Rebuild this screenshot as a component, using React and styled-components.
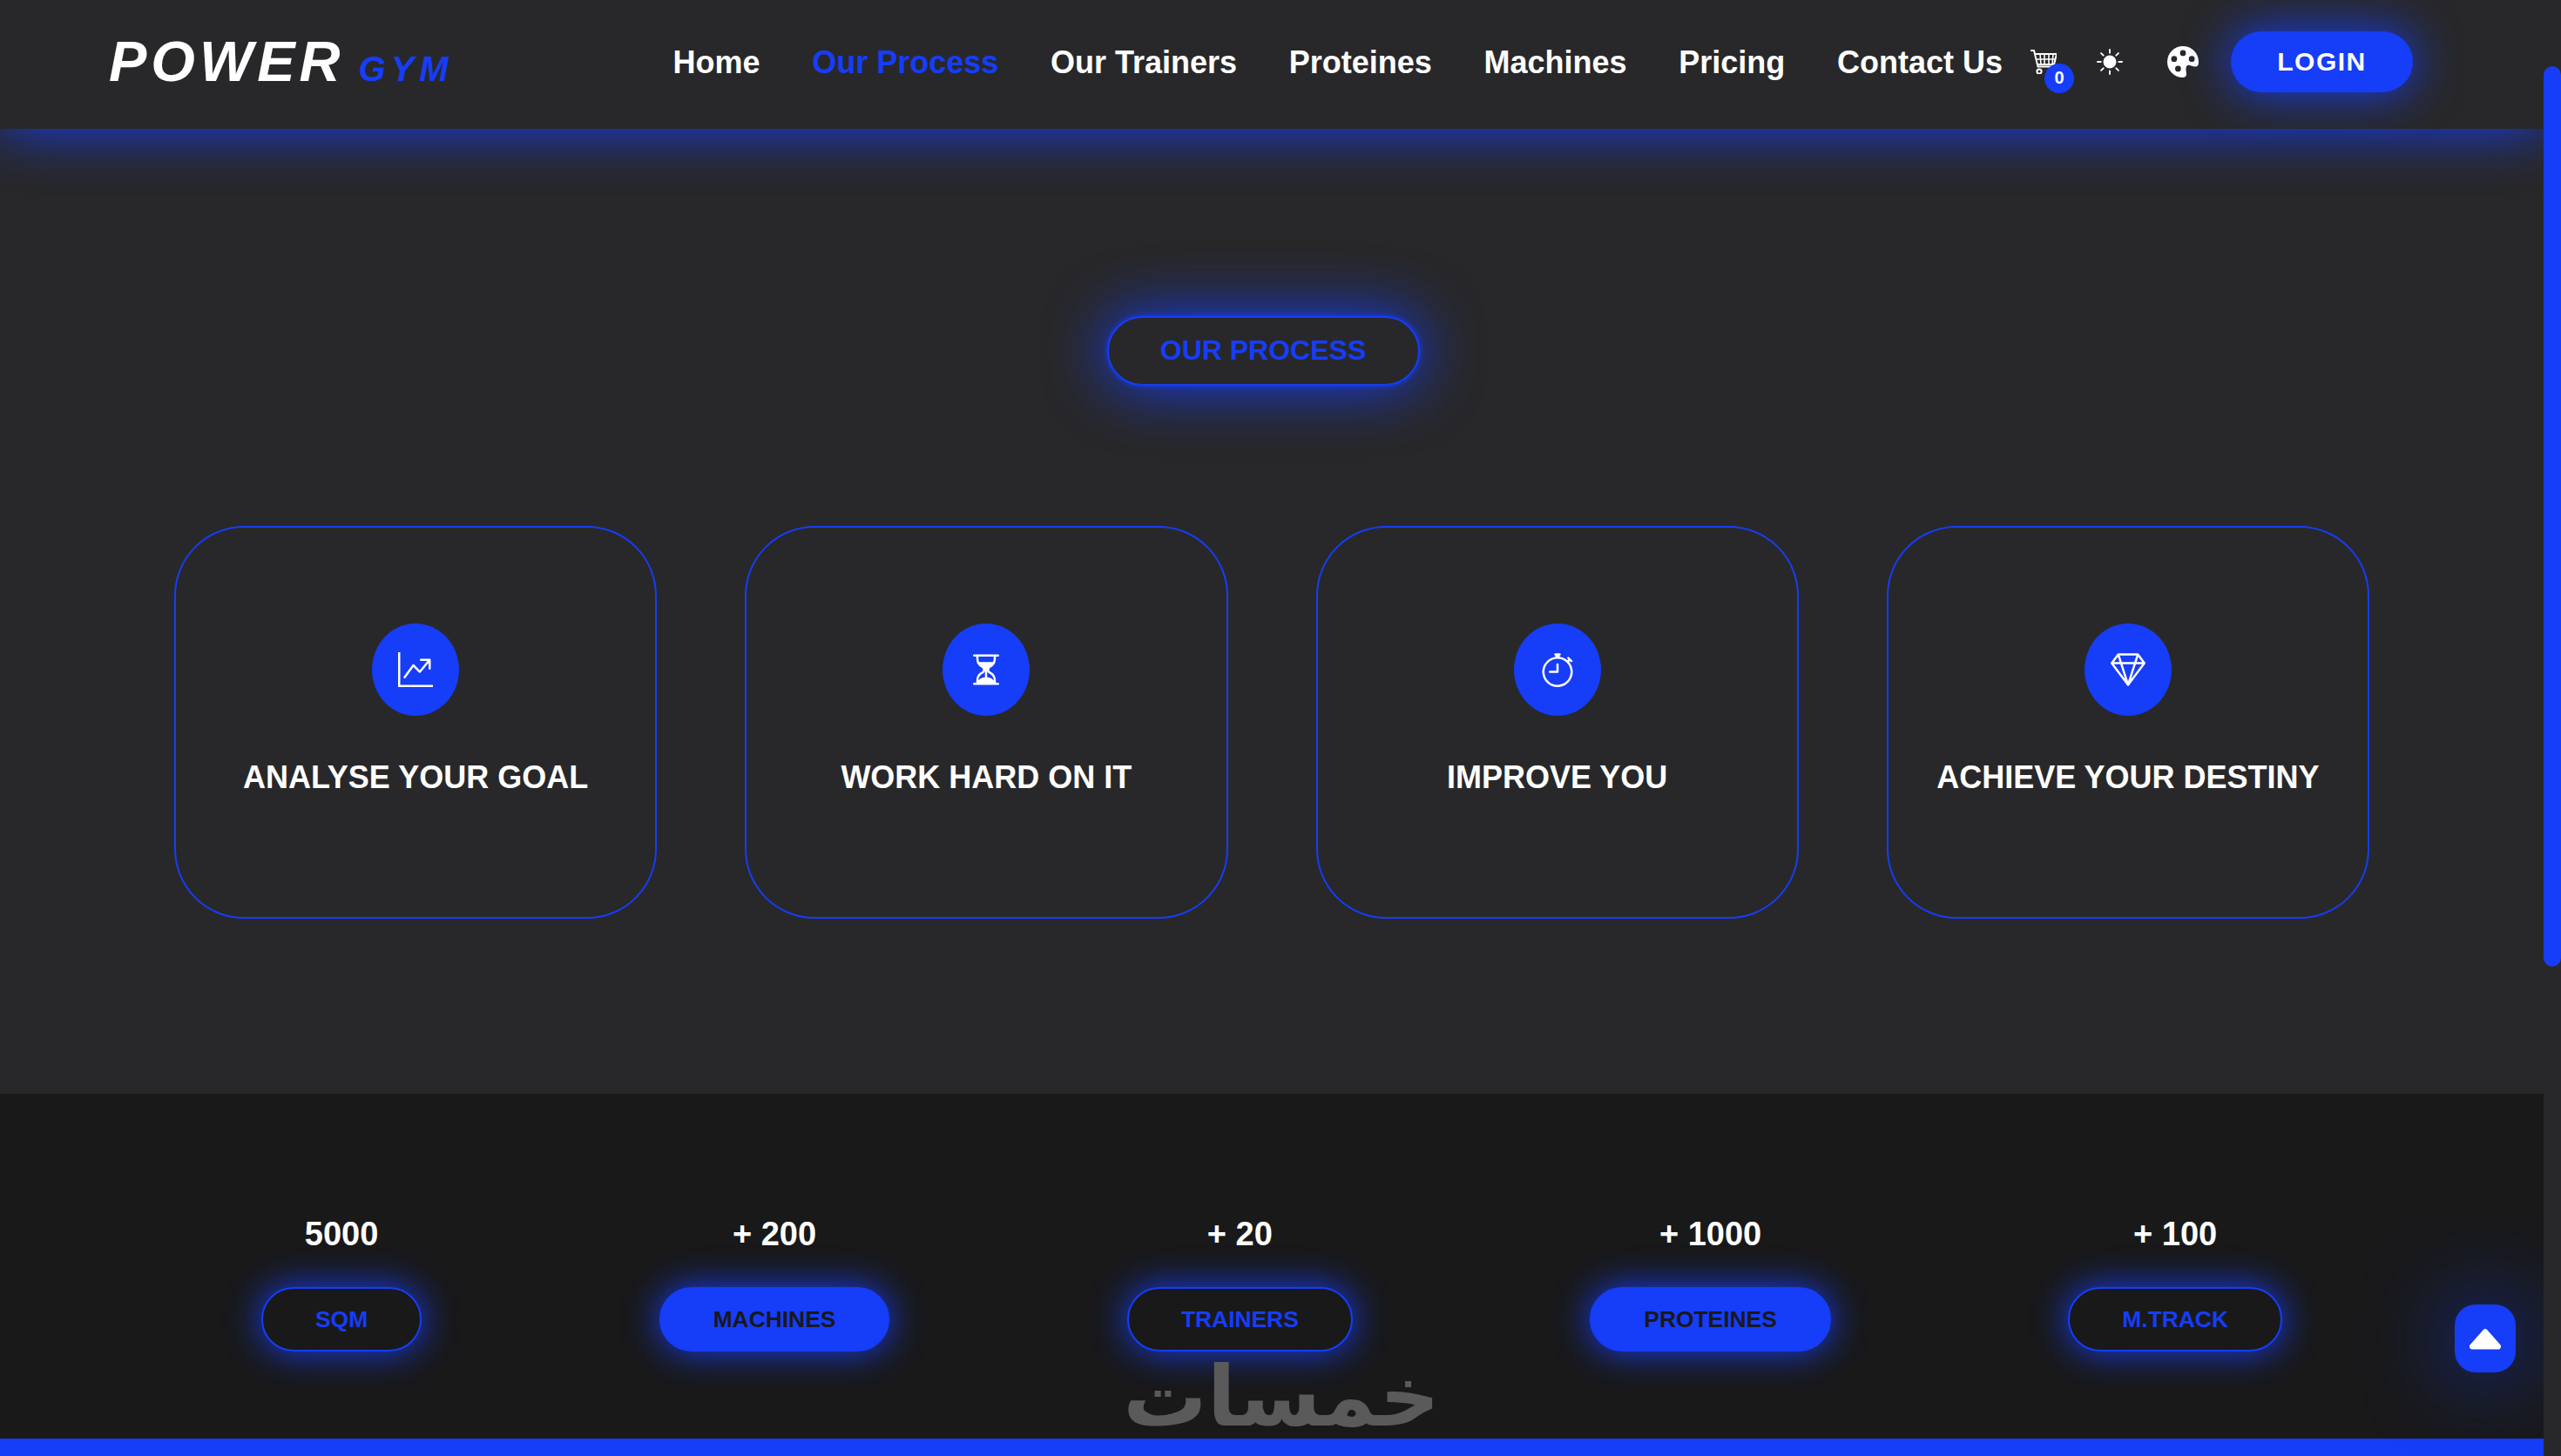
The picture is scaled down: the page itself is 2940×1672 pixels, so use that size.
import React from "react";
import styled, { createGlobalStyle } from "styled-components";
import { BsGraphUpArrow, BsHourglassSplit, BsStopwatch, BsGem, BsBrightnessHighFill, BsPaletteFill, BsCaretUpFill } from "react-icons/bs";

const BLUE = "#163df7";
const DARK = "#28282a";
const DARKER = "#19191a";

const Global = createGlobalStyle`
  html, body { margin: 0; padding: 0; background: ${DARK}; overflow: hidden; }
  body { font-family: "Liberation Sans", Arial, sans-serif; color: #fff; }
  * { box-sizing: border-box; }
`;

const Page = styled.div`
  display: flex;
  width: 2940px;
  height: 1672px;
  overflow: hidden;
`;
const Main = styled.div`
  position: relative;
  display: flex;
  flex-direction: column;
  width: 2920px;
  height: 100%;
`;
const ScrollGutter = styled.div`
  width: 20px;
  padding-top: 76px;
  background: ${DARK};
  position: relative;
  z-index: 3;
`;
const ScrollThumb = styled.div`
  height: 1034px;
  border-radius: 10px;
  background: ${BLUE};
`;

const Header = styled.header`
  position: relative;
  z-index: 2;
  flex: none;
  display: flex;
  align-items: center;
  height: 148px;
  padding: 0 150px 7px 125px;
  background: ${DARK};
  box-shadow: 0 0 64px ${BLUE};
`;
const Logo = styled.div`
  display: flex;
  align-items: baseline;
  font-style: italic;
  font-weight: 700;
  white-space: nowrap;
`;
const LogoMain = styled.span`
  font-size: 65px;
  letter-spacing: 5px;
  color: #fff;
`;
const LogoSub = styled.span`
  margin-left: 16px;
  font-size: 40px;
  letter-spacing: 6px;
  color: ${BLUE};
`;
const Nav = styled.nav`
  display: flex;
  align-items: center;
  gap: 59.7px;
  margin-left: auto;
  margin-top: 2px;
`;
const NavLink = styled.a`
  font-size: 36px;
  font-weight: 700;
  white-space: nowrap;
  color: ${p => (p.$active ? BLUE : "#fff")};
`;
const Tools = styled.div`
  display: flex;
  align-items: center;
  margin-left: 32px;
`;
const CartWrap = styled.div`
  position: relative;
  width: 30px;
  height: 28px;
  svg { display: block; }
`;
const Badge = styled.span`
  position: absolute;
  left: 16px;
  top: 16px;
  width: 34px;
  height: 34px;
  border-radius: 50%;
  background: ${BLUE};
  color: #fff;
  font-size: 20px;
  font-weight: 700;
  display: flex;
  align-items: center;
  justify-content: center;
`;
const ToolIcon = styled.span`
  display: flex;
  margin-left: ${p => p.$gap}px;
  font-size: ${p => p.$size}px;
  color: #fff;
`;
const LoginButton = styled.button`
  width: 209px;
  height: 70px;
  margin-left: 37px;
  border: none;
  border-radius: 35px;
  background: ${BLUE};
  color: #fff;
  font-family: inherit;
  font-size: 30px;
  font-weight: 700;
  letter-spacing: 1.5px;
  box-shadow: 0 0 55px ${BLUE};
`;

const ProcessSection = styled.section`
  flex: none;
  height: 1108px;
  padding-top: 215px;
  display: flex;
  flex-direction: column;
  align-items: center;
  background: ${DARK};
`;
const SectionPill = styled.h2`
  margin: 0;
  width: 359px;
  height: 80px;
  margin-left: -20px;
  padding-bottom: 2px;
  display: flex;
  align-items: center;
  justify-content: center;
  border: 2px solid ${BLUE};
  border-radius: 40px;
  background: ${DARK};
  color: ${BLUE};
  font-size: 32px;
  font-weight: 700;
  box-shadow: 0 0 6px ${BLUE}, 0 0 70px ${BLUE};
`;
const CardGrid = styled.div`
  display: grid;
  grid-template-columns: repeat(4, 1fr);
  column-gap: 101px;
  width: 2520px;
  margin-top: 161px;
`;
const Card = styled.article`
  height: 451px;
  padding-top: 110px;
  display: flex;
  flex-direction: column;
  align-items: center;
  border: 2px solid ${BLUE};
  border-radius: 80px;
`;
const IconCircle = styled.div`
  width: 100px;
  height: 106px;
  border-radius: 50%;
  background: ${BLUE};
  display: flex;
  align-items: center;
  justify-content: center;
  font-size: 40px;
  color: #fff;
`;
const CardTitle = styled.h3`
  margin: 50px 0 0;
  font-size: 36px;
  font-weight: 700;
  line-height: 1.15;
  white-space: nowrap;
  color: #fff;
`;

const StatsSection = styled.section`
  flex: 1;
  display: flex;
  justify-content: space-between;
  align-items: flex-start;
  padding: 139px 300px 0;
  background: ${DARKER};
`;
const Stat = styled.div`
  display: flex;
  flex-direction: column;
  align-items: center;
`;
const StatValue = styled.div`
  font-size: 38px;
  font-weight: 700;
  line-height: 44px;
  color: #fff;
`;
const StatPill = styled.div`
  margin-top: 39px;
  height: 74px;
  padding: 0 60px;
  display: flex;
  align-items: center;
  border: 2px solid ${BLUE};
  border-radius: 37px;
  background: ${p => (p.$filled ? BLUE : DARKER)};
  color: ${p => (p.$filled ? DARKER : BLUE)};
  font-size: 26.4px;
  font-weight: 700;
  white-space: nowrap;
  box-shadow: 0 0 40px ${BLUE};
`;
const BottomBar = styled.div`
  flex: none;
  height: 20px;
  background: ${BLUE};
`;
const ScrollTop = styled.button`
  position: absolute;
  left: 2818px;
  top: 1498px;
  width: 70px;
  height: 78px;
  padding: 0;
  border: none;
  border-radius: 24px;
  background: ${BLUE};
  color: #fff;
  display: flex;
  align-items: center;
  justify-content: center;
  font-size: 50px;
  box-shadow: 0 0 100px rgba(22, 61, 247, 0.7);
  z-index: 2;
`;
const Watermark = styled.div`
  position: absolute;
  left: 1301px;
  top: 1554px;
  width: 352px;
  text-align: center;
  font-family: "DejaVu Sans", sans-serif;
  font-size: 96px;
  font-weight: 700;
  line-height: 100px;
  color: #5a5a5a;
  z-index: 2;
`;

const CartIcon = () => (
  <svg width="30" height="28" viewBox="0 0 30 28" fill="none" stroke="#fff" strokeWidth="1.6">
    <path d="M0 1h4l4.5 18.5H26" strokeWidth="2" />
    <path d="M5 5h25l-3 12H8" strokeWidth="2" />
    <path d="M6 11h23M11 5l1 12M16 5v12M21 5v12M26 5l-1 12" />
    <circle cx="10" cy="25" r="2.6" strokeWidth="2" />
  </svg>
);

const links = ["Home", "Our Process", "Our Trainers", "Proteines", "Machines", "Pricing", "Contact Us"];
const cards = [
  { title: "ANALYSE YOUR GOAL", Icon: BsGraphUpArrow },
  { title: "WORK HARD ON IT", Icon: BsHourglassSplit },
  { title: "IMPROVE YOU", Icon: BsStopwatch },
  { title: "ACHIEVE YOUR DESTINY", Icon: BsGem },
];
const stats = [
  { value: "5000", label: "SQM" },
  { value: "+ 200", label: "MACHINES", filled: true },
  { value: "+ 20", label: "TRAINERS" },
  { value: "+ 1000", label: "PROTEINES", filled: true },
  { value: "+ 100", label: "M.TRACK" },
];

export default function App() {
  return (
    <Page>
      <Global />
      <Main>
        <Header>
          <Logo>
            <LogoMain>POWER</LogoMain>
            <LogoSub>GYM</LogoSub>
          </Logo>
          <Nav>
            {links.map(l => (
              <NavLink key={l} $active={l === "Our Process"}>{l}</NavLink>
            ))}
          </Nav>
          <Tools>
            <CartWrap>
              <CartIcon />
              <Badge>0</Badge>
            </CartWrap>
            <ToolIcon $gap={46} $size={30}><BsBrightnessHighFill /></ToolIcon>
            <ToolIcon $gap={51} $size={36}><BsPaletteFill /></ToolIcon>
            <LoginButton>LOGIN</LoginButton>
          </Tools>
        </Header>
        <ProcessSection>
          <SectionPill>OUR PROCESS</SectionPill>
          <CardGrid>
            {cards.map(({ title, Icon }) => (
              <Card key={title}>
                <IconCircle><Icon /></IconCircle>
                <CardTitle>{title}</CardTitle>
              </Card>
            ))}
          </CardGrid>
        </ProcessSection>
        <StatsSection>
          {stats.map(s => (
            <Stat key={s.label}>
              <StatValue>{s.value}</StatValue>
              <StatPill $filled={s.filled}>{s.label}</StatPill>
            </Stat>
          ))}
        </StatsSection>
        <BottomBar />
        <Watermark lang="ar" dir="rtl">خمسات</Watermark>
        <ScrollTop><BsCaretUpFill /></ScrollTop>
      </Main>
      <ScrollGutter><ScrollThumb /></ScrollGutter>
    </Page>
  );
}
